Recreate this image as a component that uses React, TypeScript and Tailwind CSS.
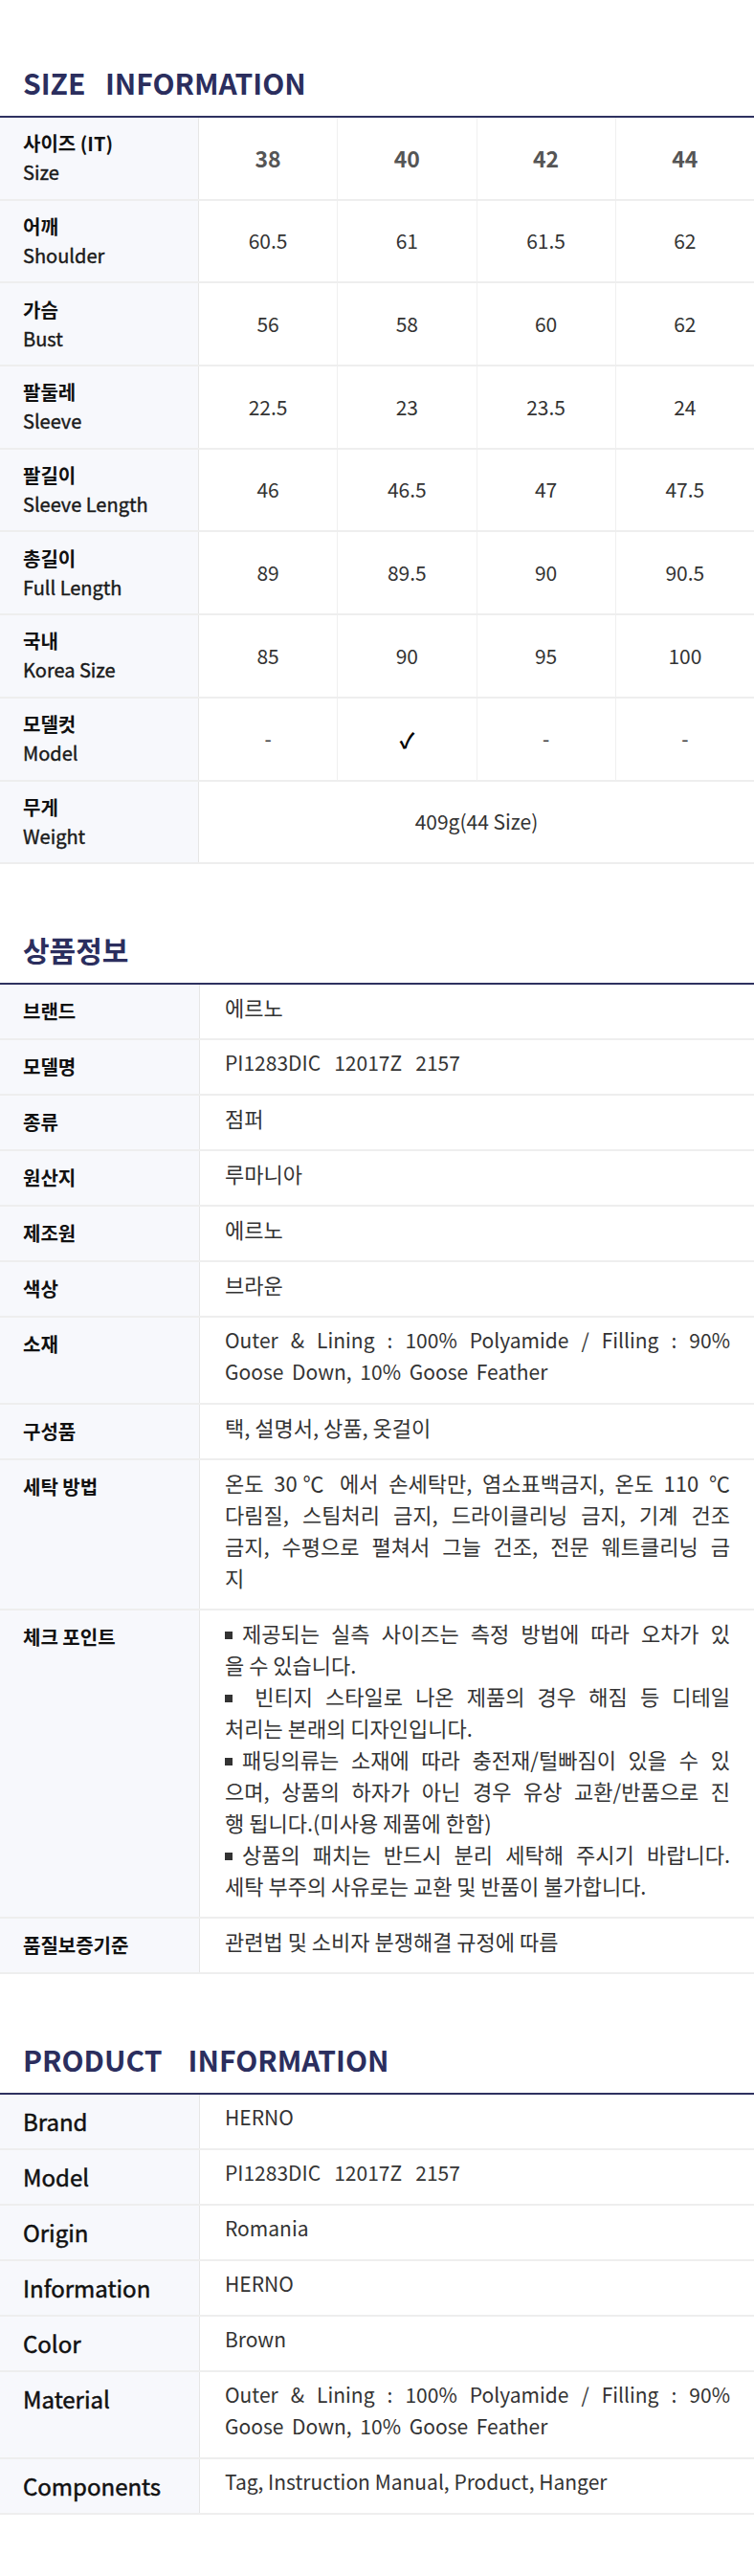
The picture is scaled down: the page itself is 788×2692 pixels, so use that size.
import React from "react";

const sizes = ["38", "40", "42", "44"];

const sizeRows = [
  { ko: "어깨", en: "Shoulder", v: ["60.5", "61", "61.5", "62"] },
  { ko: "가슴", en: "Bust", v: ["56", "58", "60", "62"] },
  { ko: "팔둘레", en: "Sleeve", v: ["22.5", "23", "23.5", "24"] },
  { ko: "팔길이", en: "Sleeve Length", v: ["46", "46.5", "47", "47.5"] },
  { ko: "총길이", en: "Full Length", v: ["89", "89.5", "90", "90.5"] },
  { ko: "국내", en: "Korea Size", v: ["85", "90", "95", "100"] },
  { ko: "모델컷", en: "Model", v: ["-", "✓", "-", "-"] },
];

function SectionTitle({ children, first }: { children: React.ReactNode; first?: boolean }) {
  return (
    <div className={first ? "pt-[66px]" : "pt-[69px]"}>
      <h2 className="px-6 text-[30px] leading-[40px] font-bold text-[#2b2e5e] whitespace-pre">{children}</h2>
      <div className="mt-[15px] h-[2px] bg-[#2e3160]" />
    </div>
  );
}

function SizeLabel({ ko, en }: { ko: string; en: string }) {
  return (
    <div className="w-[208px] shrink-0 bg-[#f7f8fc] border-r border-[#e6e6e6] pl-6 flex flex-col justify-center">
      <span className="text-[20px] leading-[30px] font-bold text-[#111]">{ko}</span>
      <span className="text-[20px] leading-[30px] text-[#1a1a1a] [-webkit-text-stroke:0.4px]">{en}</span>
    </div>
  );
}

function SizeTable() {
  return (
    <div>
      {/* header */}
      <div className="flex h-[86.7px] border-b-2 border-[#eeeeee]">
        <SizeLabel ko="사이즈 (IT)" en="Size" />
        {sizes.map((s) => (
          <div
            key={s}
            className="flex-1 flex items-center justify-center border-r border-[#f0f0f0] last:border-r-0 text-[23px] font-bold text-[#555]"
          >
            {s}
          </div>
        ))}
      </div>
      {sizeRows.map((row) => (
        <div key={row.ko} className="flex h-[86.7px] border-b-2 border-[#eeeeee]">
          <SizeLabel ko={row.ko} en={row.en} />
          {row.v.map((v, i) => (
            <div
              key={i}
              className={`flex-1 flex items-center justify-center border-r border-[#f0f0f0] last:border-r-0 ${
                v === "✓" ? "text-[22px] font-bold text-black" : "text-[21px] text-[#333]"
              }`}
            >
              {v}
            </div>
          ))}
        </div>
      ))}
      <div className="flex h-[86.7px] border-b-2 border-[#eeeeee]">
        <SizeLabel ko="무게" en="Weight" />
        <div className="flex-1 flex items-center justify-center text-[21px] text-[#333]">409g(44 Size)</div>
      </div>
    </div>
  );
}

function InfoRow({ label, en, children }: { label: string; en?: boolean; children: React.ReactNode }) {
  return (
    <div className="flex border-b-2 border-[#eeeeee]">
      <div
        className={`w-[209px] shrink-0 bg-[#f7f8fc] border-r border-[#e6e6e6] pl-6 pt-[11px] leading-[33px] text-[#111] ${
          en ? "text-[24px] [-webkit-text-stroke:0.5px]" : "text-[20px] font-bold"
        }`}
      >
        {label}
      </div>
      <div className="flex-1 min-w-0 pl-[26px] pr-[25px] pt-[7px] pb-[16px] text-[22px] leading-[33px] text-[#333]">
        {children}
      </div>
    </div>
  );
}

// latin-only values run a touch smaller, like the narrow face in the original
function Latin({ children }: { children: React.ReactNode }) {
  return <div className="text-[21px]">{children}</div>;
}

// one visual line, stretched edge to edge
function J({ children }: { children: React.ReactNode }) {
  return <div className="text-justify [text-align-last:justify]">{children}</div>;
}

function Bullet() {
  return <span className="inline-block w-[8px] h-[8px] bg-[#333] mr-[10px] align-[3px]" />;
}

function Material() {
  return (
    <div className="text-[21px]">
      <J>Outer &amp; Lining : 100% Polyamide / Filling : 90%</J>
      <div className="[word-spacing:4px]">Goose Down, 10% Goose Feather</div>
    </div>
  );
}

function ModelNo() {
  return <div className="whitespace-pre text-[21px]">PI1283DIC   12017Z   2157</div>;
}

export default function App() {
  return (
    <div className="w-[788px] bg-white pb-[67px] font-['Noto_Sans_CJK_KR','Noto_Sans',sans-serif]">
      <SectionTitle first>SIZE   INFORMATION</SectionTitle>
      <SizeTable />

      <SectionTitle>상품정보</SectionTitle>
      <div>
        <InfoRow label="브랜드">에르노</InfoRow>
        <InfoRow label="모델명">
          <ModelNo />
        </InfoRow>
        <InfoRow label="종류">점퍼</InfoRow>
        <InfoRow label="원산지">루마니아</InfoRow>
        <InfoRow label="제조원">에르노</InfoRow>
        <InfoRow label="색상">브라운</InfoRow>
        <InfoRow label="소재">
          <Material />
        </InfoRow>
        <InfoRow label="구성품">택, 설명서, 상품, 옷걸이</InfoRow>
        <InfoRow label="세탁 방법">
          <J>온도 30℃ 에서 손세탁만, 염소표백금지, 온도 110 ℃</J>
          <J>다림질, 스팀처리 금지, 드라이클리닝 금지, 기계 건조</J>
          <J>금지, 수평으로 펼쳐서 그늘 건조, 전문 웨트클리닝 금</J>
          <div>지</div>
        </InfoRow>
        <InfoRow label="체크 포인트">
          <J>
            <Bullet />제공되는 실측 사이즈는 측정 방법에 따라 오차가 있
          </J>
          <div>을 수 있습니다.</div>
          <J>
            <Bullet /> 빈티지 스타일로 나온 제품의 경우 해짐 등 디테일
          </J>
          <div>처리는 본래의 디자인입니다.</div>
          <J>
            <Bullet />패딩의류는 소재에 따라 충전재/털빠짐이 있을 수 있
          </J>
          <J>으며, 상품의 하자가 아닌 경우 유상 교환/반품으로 진</J>
          <div>행 됩니다.(미사용 제품에 한함)</div>
          <J>
            <Bullet />상품의 패치는 반드시 분리 세탁해 주시기 바랍니다.
          </J>
          <div>세탁 부주의 사유로는 교환 및 반품이 불가합니다.</div>
        </InfoRow>
        <InfoRow label="품질보증기준">관련법 및 소비자 분쟁해결 규정에 따름</InfoRow>
      </div>

      <SectionTitle>PRODUCT    INFORMATION</SectionTitle>
      <div>
        <InfoRow label="Brand" en>
          <Latin>HERNO</Latin>
        </InfoRow>
        <InfoRow label="Model" en>
          <ModelNo />
        </InfoRow>
        <InfoRow label="Origin" en>
          <Latin>Romania</Latin>
        </InfoRow>
        <InfoRow label="Information" en>
          <Latin>HERNO</Latin>
        </InfoRow>
        <InfoRow label="Color" en>
          <Latin>Brown</Latin>
        </InfoRow>
        <InfoRow label="Material" en>
          <Material />
        </InfoRow>
        <InfoRow label="Components" en>
          <Latin>Tag, Instruction Manual, Product, Hanger</Latin>
        </InfoRow>
      </div>
    </div>
  );
}
